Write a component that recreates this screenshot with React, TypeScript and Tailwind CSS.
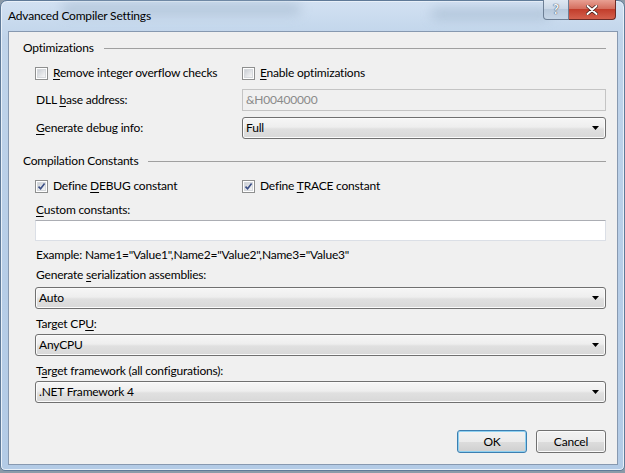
import React from "react";

const font = { fontFamily: 'Lato, "Noto Sans", sans-serif' };

function U({ children }: { children: React.ReactNode }) {
  return <span className="underline underline-offset-2 decoration-[1px]">{children}</span>;
}

function Check({ checked }: { checked?: boolean }) {
  return (
    <div className="w-[13px] h-[13px] border border-[#8e8f8f] bg-white p-[1px] shrink-0">
      <div className="w-full h-full bg-[linear-gradient(135deg,#cbcfd5,#f6f6f6)] border border-[#d6d9dd] relative">
        {checked && (
          <svg viewBox="0 0 9 9" className="absolute left-[-1px] top-[-1px] w-[9px] h-[9px]">
            <path d="M1.5 4.6 L3.6 6.8 L7.6 1.6" fill="none" stroke="#3b4f86" strokeWidth="1.6" />
          </svg>
        )}
      </div>
    </div>
  );
}

function CheckRow({ checked, children }: { checked?: boolean; children: React.ReactNode }) {
  return (
    <div className="flex items-center gap-[5px] h-[16px]">
      <Check checked={checked} />
      <span>{children}</span>
    </div>
  );
}

function Combo({ value }: { value: string }) {
  return (
    <div className="h-[22px] rounded-[3px] border border-[#707070] bg-[linear-gradient(#f6f6f6,#eeeeee_45%,#e0e0e0_55%,#d8d8d8)] shadow-[inset_0_0_0_1px_#fbfbfb] flex items-center justify-between pl-[3px] pr-[6px]">
      <span>{value}</span>
      <svg viewBox="0 0 7 4" className="w-[7px] h-[4px]">
        <path d="M0 0 H7 L3.5 4 Z" fill="#000" />
      </svg>
    </div>
  );
}

function Header({ children }: { children: React.ReactNode }) {
  return (
    <div className="flex items-center h-[16px] -ml-[12px]">
      <span className="mr-[10px]">{children}</span>
      <div className="flex-1 h-0 border-t border-[#a0a0a0]" />
    </div>
  );
}

function Label({ children }: { children: React.ReactNode }) {
  return (
    <div className="h-[16px] flex items-center pl-[1px]">
      <span>{children}</span>
    </div>
  );
}

export default function App() {
  return (
    <div className="w-[625px] h-[473px] relative overflow-hidden bg-[#8b9aa8]" style={font}>
      <div className="absolute inset-0 bottom-[2px] rounded-t-[7px] rounded-b-[5px] border border-[#5f7a98] bg-[linear-gradient(180deg,#d2e1f2_0%,#c0d4ea_8%,#b6cde7_60%,#b3cbe6_100%)] shadow-[inset_0_0_0_1px_#e8f0f9]">
        <div className="absolute left-[60px] top-[2px] w-[240px] h-[12px] rounded-full bg-[#a9bdd2] blur-[6px] opacity-70" />
        <div className="absolute left-[430px] top-[8px] w-[120px] h-[10px] rounded-full bg-[#a3b8ce] blur-[6px] opacity-70" />
        <div className="h-[30px] flex items-center pl-[7px] text-[12px] text-black relative tracking-[-0.2px]">
          <span>Advanced Compiler Settings</span>
        </div>
        <div className="absolute top-[-1px] right-[8px] flex">
          <div className="w-[26px] h-[20px] rounded-bl-[4px] border border-[#6d7f95] border-t-0 bg-[linear-gradient(#dfe8f2,#c8d6e6_50%,#b8c9dc_50%,#c6d6e7)] flex items-center justify-center text-[13px] font-bold text-[#f4f7fb] [text-shadow:0_0_1px_#39495c,0_0_1px_#39495c]">
            ?
          </div>
          <div className="w-[47px] h-[20px] rounded-br-[4px] border border-[#6d2b26] border-t-0 border-l-0 bg-[linear-gradient(#e8a093,#d56f5f_45%,#c23e2c_50%,#d4604d)] flex items-center justify-center">
            <svg viewBox="0 0 12 10" className="w-[12px] h-[10px]">
              <path d="M1.5 1 L10.5 9 M10.5 1 L1.5 9" stroke="#3d1a16" strokeWidth="3.4" strokeLinecap="round" />
              <path d="M1.5 1 L10.5 9 M10.5 1 L1.5 9" stroke="#ffffff" strokeWidth="2" strokeLinecap="round" />
            </svg>
          </div>
        </div>
        <div className="absolute left-[7px] top-[30px] w-[610px] h-[434px] border border-[#8799b0] bg-[#f0f0f0] text-[12px] text-black tracking-[-0.2px]">
          <div className="pl-[26px] pr-[11px] flex flex-col">
            <div className="mt-[8px]">
              <Header>Optimizations</Header>
            </div>
            <div className="mt-[9px] flex">
              <div className="w-[207px]">
                <CheckRow>
                  <U>R</U>emove integer overflow checks
                </CheckRow>
              </div>
              <CheckRow>
                <U>E</U>nable optimizations
              </CheckRow>
            </div>
            <div className="mt-[8px] flex items-center h-[22px]">
              <div className="w-[207px] pl-[1px]">
                <span>DLL </span>
                <U>b</U>
                <span>ase address:</span>
              </div>
              <div className="flex-1 h-[22px] border border-[#c4c4c4] bg-[#f0f0f0] flex items-center pl-[3px] text-[#8a8a8a]">
                <span>&amp;H00400000</span>
              </div>
            </div>
            <div className="mt-[6px] flex items-center h-[22px]">
              <div className="w-[207px] pl-[1px]">
                <U>G</U>enerate debug info:
              </div>
              <div className="flex-1">
                <Combo value="Full" />
              </div>
            </div>
            <div className="mt-[14px]">
              <Header>Compilation Constants</Header>
            </div>
            <div className="mt-[9px] flex">
              <div className="w-[207px]">
                <CheckRow checked>
                  {"Define "}
                  <U>D</U>EBUG constant
                </CheckRow>
              </div>
              <CheckRow checked>
                {"Define "}
                <U>T</U>RACE constant
              </CheckRow>
            </div>
            <div className="mt-[8px]">
              <Label>
                <U>C</U>ustom constants:
              </Label>
            </div>
            <div className="mt-[2px] h-[21px] border border-[#dbdfe6] border-t-[#abadb3] bg-white" />
            <div className="mt-[6px]">
              <Label>Example: Name1="Value1",Name2="Value2",Name3="Value3"</Label>
            </div>
            <div className="mt-[4px]">
              <Label>
                {"Generate "}
                <U>s</U>erialization assemblies:
              </Label>
            </div>
            <div className="mt-[4px]">
              <Combo value="Auto" />
            </div>
            <div className="mt-[7px]">
              <Label>
                Target CP<U>U</U>:
              </Label>
            </div>
            <div className="mt-[2px]">
              <Combo value="AnyCPU" />
            </div>
            <div className="mt-[7px]">
              <Label>
                T<U>a</U>rget framework (all configurations):
              </Label>
            </div>
            <div className="mt-[2px]">
              <Combo value=".NET Framework 4" />
            </div>
            <div className="mt-[27px] flex justify-end gap-[9px]">
              <div className="w-[70px] h-[23px] rounded-[3px] border border-[#3c7fb1] shadow-[inset_0_0_0_1px_#8fd0f0] bg-[linear-gradient(#f2f2f2,#ebebeb_50%,#dddddd_50%,#cfcfcf)] flex items-center justify-center">
                OK
              </div>
              <div className="w-[70px] h-[23px] rounded-[3px] border border-[#707070] shadow-[inset_0_0_0_1px_#fbfbfb] bg-[linear-gradient(#f2f2f2,#ebebeb_50%,#dddddd_50%,#cfcfcf)] flex items-center justify-center">
                Cancel
              </div>
            </div>
          </div>
        </div>
      </div>
    </div>
  );
}
